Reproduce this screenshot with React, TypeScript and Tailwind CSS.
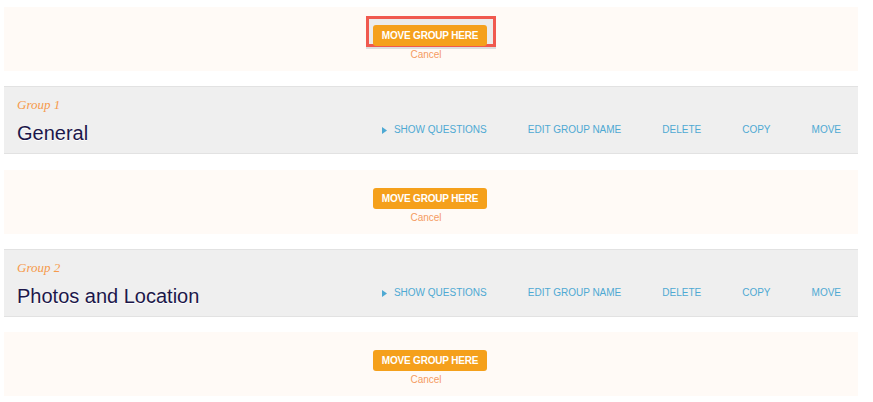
import React from "react";

type Group = { label: string; name: string };

const groups: Group[] = [
  { label: "Group 1", name: "General" },
  { label: "Group 2", name: "Photos and Location" },
];

const actions = ["EDIT GROUP NAME", "DELETE", "COPY", "MOVE"];

function DropZone({ highlighted = false }: { highlighted?: boolean }) {
  return (
    <div className="h-[64px] bg-[#fffaf6] flex flex-col items-center pt-[15px]">
      <div className="relative ml-[-2px]">
        {/* annotation box around the first button */}
        {highlighted && (
          <div className="absolute left-[-7px] top-[-6px] w-[130px] h-[31px] border-[3px] border-[#f0594f] bg-[#ecebea] shadow-[0_2px_0_#dddddd]" />
        )}
        <button className="relative w-[114px] h-[21px] rounded-[3px] bg-[#f5a01b] text-white font-bold text-[10px] leading-[21px] tracking-[-0.2px] text-center">
          MOVE GROUP HERE
        </button>
      </div>
      <a className="relative mt-[2px] ml-[-10px] text-[10px] leading-[14px] text-[#f59a62] cursor-pointer">
        Cancel
      </a>
    </div>
  );
}

function GroupRow({ group }: { group: Group }) {
  return (
    <div className="h-[68px] bg-[#efefef] border-y border-[#e2e2e2] pl-[13px] pr-[17px] pt-[10px]">
      <div className="font-['Liberation_Serif',serif] italic text-[13px] leading-[16px] text-[#f69a4c]">
        {group.label}
      </div>
      <div className="flex items-start justify-between mt-[8px]">
        <h2 className="text-[20px] leading-[24px] text-[#1c174a] [text-shadow:0_1px_0_#ffffff]">
          {group.name}
        </h2>
        <div className="flex items-center gap-[41px] mt-[2px] text-[10px] leading-[14px] text-[#4ea9d3]">
          <a className="flex items-center gap-[7px] cursor-pointer">
            <svg width="5" height="7" viewBox="0 0 5 7" className="fill-[#4ea9d3]">
              <path d="M0 0 L5 3.5 L0 7 Z" />
            </svg>
            SHOW QUESTIONS
          </a>
          {actions.map((a) => (
            <a key={a} className="cursor-pointer">
              {a}
            </a>
          ))}
        </div>
      </div>
    </div>
  );
}

export default function App() {
  return (
    <div className="min-h-[402px] bg-white font-['Liberation_Sans',Arial,sans-serif] pt-[7px]">
      <div className="w-[854px] ml-[4px] flex flex-col">
        <DropZone highlighted />
        <div className="mt-[15px]">
          <GroupRow group={groups[0]} />
        </div>
        <div className="mt-[16px]">
          <DropZone />
        </div>
        <div className="mt-[15px]">
          <GroupRow group={groups[1]} />
        </div>
        <div className="mt-[15px]">
          <DropZone />
        </div>
      </div>
    </div>
  );
}
